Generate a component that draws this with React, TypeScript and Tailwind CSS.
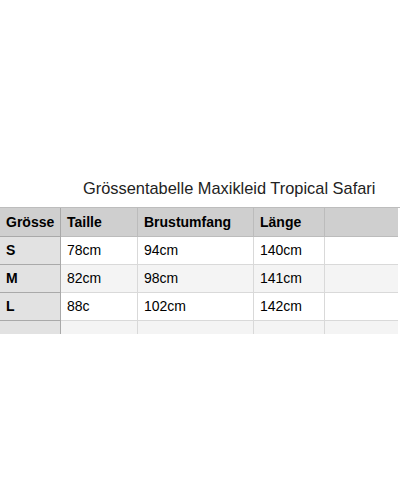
const rows = [
  { size: 'S', taille: '78cm', brust: '94cm', laenge: '140cm' },
  { size: 'M', taille: '82cm', brust: '98cm', laenge: '141cm' },
  { size: 'L', taille: '88c', brust: '102cm', laenge: '142cm' },
];

export default function App() {
  return (
    <div className="w-[400px] h-[500px] bg-white overflow-hidden font-['Liberation_Sans',Arial,sans-serif] text-black">
      <div className="pt-[177px] pl-[83px] text-[16.4px] leading-[22px] text-[#222]">
        Grössentabelle Maxikleid Tropical Safari
      </div>

      <div className="mt-[8px] grid grid-cols-[61px_77px_116px_71px_73px] border-t border-[#bdbdbd]">
        {/* header */}
        <div className="h-[29px] bg-[#cfcfcf] border-r border-b border-[#a9a9a9] pl-[6px] flex items-center text-[14px] font-bold">Grösse</div>
        <div className="h-[29px] bg-[#cfcfcf] border-r border-b border-[#bcbcbc] pl-[6px] flex items-center text-[14px] font-bold">Taille</div>
        <div className="h-[29px] bg-[#cfcfcf] border-r border-b border-[#bcbcbc] pl-[6px] flex items-center text-[14px] font-bold">Brustumfang</div>
        <div className="h-[29px] bg-[#cfcfcf] border-r border-b border-[#bcbcbc] pl-[6px] flex items-center text-[14px] font-bold">Länge</div>
        <div className="h-[29px] bg-[#cfcfcf] border-b border-[#bcbcbc]"></div>

        {rows.map((r, i) => {
          const bg = i % 2 === 1 ? 'bg-[#f4f4f4]' : 'bg-white';
          return (
            <div key={r.size} className="contents">
              <div className="h-[28px] bg-[#e2e2e2] border-r border-b border-[#a9a9a9] pl-[6px] flex items-center text-[14px] font-bold">{r.size}</div>
              <div className={`h-[28px] ${bg} border-r border-b border-[#d9d9d9] pl-[6px] flex items-center text-[14px]`}>{r.taille}</div>
              <div className={`h-[28px] ${bg} border-r border-b border-[#d9d9d9] pl-[6px] flex items-center text-[14px]`}>{r.brust}</div>
              <div className={`h-[28px] ${bg} border-r border-b border-[#d9d9d9] pl-[6px] flex items-center text-[14px]`}>{r.laenge}</div>
              <div className={`h-[28px] ${bg} border-b border-[#d9d9d9]`}></div>
            </div>
          );
        })}

        {/* partial last row */}
        <div className="h-[13px] bg-[#e2e2e2] border-r border-[#a9a9a9]"></div>
        <div className="h-[13px] bg-[#f4f4f4] border-r border-[#d9d9d9]"></div>
        <div className="h-[13px] bg-[#f4f4f4] border-r border-[#d9d9d9]"></div>
        <div className="h-[13px] bg-[#f4f4f4] border-r border-[#d9d9d9]"></div>
        <div className="h-[13px] bg-[#f4f4f4]"></div>
      </div>
    </div>
  );
}
